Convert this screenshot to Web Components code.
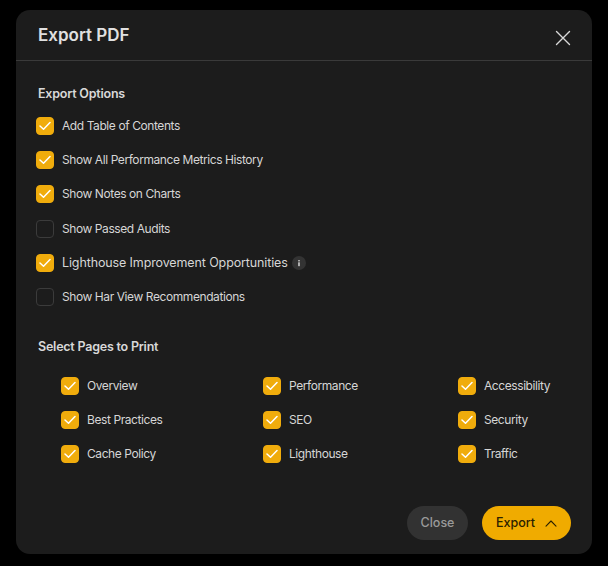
<!DOCTYPE html>
<html>
<head>
<meta charset="utf-8">
<title>Export PDF</title>
<style>
  html, body { margin: 0; height: 100%; background: #000; }
  body { font-family: "Inter", "Liberation Sans", sans-serif; color: #d6d6d6; }
</style>
</head>
<body>
<export-dialog>
  <span slot="title">Export PDF</span>
  <section-heading>Export Options</section-heading>
  <div slot="options">
    <check-row checked>Add Table of Contents</check-row>
    <check-row checked>Show All Performance Metrics History</check-row>
    <check-row checked>Show Notes on Charts</check-row>
    <check-row>Show Passed Audits</check-row>
    <check-row checked large>Lighthouse Improvement Opportunities<info-badge slot="after"></info-badge></check-row>
    <check-row>Show Har View Recommendations</check-row>
  </div>
  <section-heading slot="pages-title">Select Pages to Print</section-heading>
  <div slot="pages">
    <check-row checked>Overview</check-row>
    <check-row checked>Performance</check-row>
    <check-row checked>Accessibility</check-row>
    <check-row checked>Best Practices</check-row>
    <check-row checked>SEO</check-row>
    <check-row checked>Security</check-row>
    <check-row checked>Cache Policy</check-row>
    <check-row checked>Lighthouse</check-row>
    <check-row checked>Traffic</check-row>
  </div>
  <pill-button slot="footer" variant="muted">Close</pill-button>
  <pill-button slot="footer" variant="primary" chevron>Export</pill-button>
</export-dialog>

<script>
class SectionHeading extends HTMLElement {
    constructor() {
        super();
        this.attachShadow({ mode: 'open' });
        this.shadowRoot.innerHTML = `
            <style>
                :host {
                    display: block;
                    font-size: 12.5px;
                    line-height: 16px;
                    font-weight: 600;
                    letter-spacing: -0.22px;
                    color: #d8d8d8;
                }
            </style>
            <slot></slot>
        `;
    }
}

class InfoBadge extends HTMLElement {
    constructor() {
        super();
        this.attachShadow({ mode: 'open' });
        this.shadowRoot.innerHTML = `
            <style>
                :host {
                    display: inline-flex;
                    align-items: center;
                    justify-content: center;
                    width: 14px;
                    height: 14px;
                    border-radius: 50%;
                    background: #333;
                }
                svg { display: block; }
            </style>
            <svg width="14" height="14" viewBox="0 0 14 14" fill="#cfcfcf">
                <rect x="6.2" y="3.9" width="1.6" height="1.5" rx=".4"/>
                <rect x="6.2" y="6.2" width="1.6" height="4" rx=".4"/>
            </svg>
        `;
    }
}

class CheckRow extends HTMLElement {
    constructor() {
        super();
        this.attachShadow({ mode: 'open' });
        this.shadowRoot.innerHTML = `
            <style>
                :host {
                    display: flex;
                    align-items: center;
                    gap: 8px;
                    height: 18px;
                    font-size: 12px;
                    line-height: 18px;
                    letter-spacing: -0.42px;
                    color: #d6d6d6;
                    white-space: nowrap;
                }
                :host([large]) { font-size: 12.5px; letter-spacing: -0.12px; }
                .box {
                    flex: none;
                    box-sizing: border-box;
                    width: 18px;
                    height: 18px;
                    border-radius: 4px;
                    border: 1px solid #3b3b3b;
                }
                :host([checked]) .box {
                    background: #f0ac0c;
                    border-color: #f0ac0c;
                }
                svg { display: none; margin: 3px 0 0 2px; }
                :host([checked]) svg { display: block; }
                ::slotted([slot="after"]) { margin-left: -4px; }
            </style>
            <span class="box">
                <svg width="12" height="10" viewBox="0 0 12 10" fill="none" stroke="#fff" stroke-width="1.5" stroke-linecap="round" stroke-linejoin="round">
                    <path d="M1 5 L4.5 8.2 L11 1.5"/>
                </svg>
            </span>
            <span><slot></slot></span>
            <slot name="after"></slot>
        `;
    }
}

class PillButton extends HTMLElement {
    constructor() {
        super();
        this.attachShadow({ mode: 'open' });
        this.shadowRoot.innerHTML = `
            <style>
                :host {
                    display: inline-flex;
                    align-items: center;
                    justify-content: center;
                    gap: 10px;
                    box-sizing: border-box;
                    height: 34px;
                    padding-bottom: 2px;
                    border-radius: 17px;
                    font-size: 12.5px;
                    font-weight: 500;
                    cursor: pointer;
                }
                :host([variant="muted"]) {
                    width: 61px;
                    background: #323232;
                    color: #9a9a9a;
                }
                :host([variant="primary"]) {
                    width: 89px;
                    background: #f0ab00;
                    color: #2b2100;
                }
                svg { display: none; }
                :host([chevron]) svg { display: block; margin-top: 2px; }
            </style>
            <slot></slot>
            <svg width="12" height="7" viewBox="0 0 12 7" fill="none" stroke="#2b2100" stroke-width="1.1" stroke-linecap="round" stroke-linejoin="round">
                <path d="M1 6.2 L6 1 L11 6.2"/>
            </svg>
        `;
    }
}

class ExportDialog extends HTMLElement {
    constructor() {
        super();
        this.attachShadow({ mode: 'open' });
        this.shadowRoot.innerHTML = `
            <style>
                :host {
                    display: block;
                    box-sizing: border-box;
                    width: 576px;
                    height: 544px;
                    margin: 10px 0 0 16px;
                    background: #1c1c1c;
                    border-radius: 14px;
                    overflow: hidden;
                }
                header {
                    display: flex;
                    align-items: center;
                    justify-content: space-between;
                    box-sizing: border-box;
                    height: 51px;
                    padding: 0 21px 0 22px;
                    border-bottom: 1px solid #3a3a3a;
                }
                .title {
                    font-size: 17px;
                    font-weight: 600;
                    color: #e0e0e0;
                }
                .close { display: block; margin-top: 5px; }
                main { padding: 25px 20px 0 20px; }
                .head { padding-left: 2px; margin-bottom: 15px; }
                ::slotted([slot="options"]) {
                    display: grid;
                    row-gap: 16.2px;
                }
                .pages-title { padding-left: 2px; margin: 33px 0 22px; }
                ::slotted([slot="pages"]) {
                    display: grid;
                    grid-template-columns: 202px 195px auto;
                    row-gap: 16.2px;
                    padding-left: 25px;
                }
                footer {
                    display: flex;
                    justify-content: flex-end;
                    gap: 14px;
                    padding: 43px 21px 0 0;
                }
            </style>
            <header>
                <div class="title"><slot name="title"></slot></div>
                <svg class="close" width="16" height="16" viewBox="0 0 16 16" fill="none" stroke="#d8d8d8" stroke-width="1.4" stroke-linecap="round">
                    <path d="M1.5 1.5 L14.5 14.5 M14.5 1.5 L1.5 14.5"/>
                </svg>
            </header>
            <main>
                <div class="head"><slot></slot></div>
                <slot name="options"></slot>
                <div class="pages-title"><slot name="pages-title"></slot></div>
                <slot name="pages"></slot>
            </main>
            <footer><slot name="footer"></slot></footer>
        `;
    }
}

customElements.define('section-heading', SectionHeading);
customElements.define('info-badge', InfoBadge);
customElements.define('check-row', CheckRow);
customElements.define('pill-button', PillButton);
customElements.define('export-dialog', ExportDialog);
</script>
</body>
</html>
